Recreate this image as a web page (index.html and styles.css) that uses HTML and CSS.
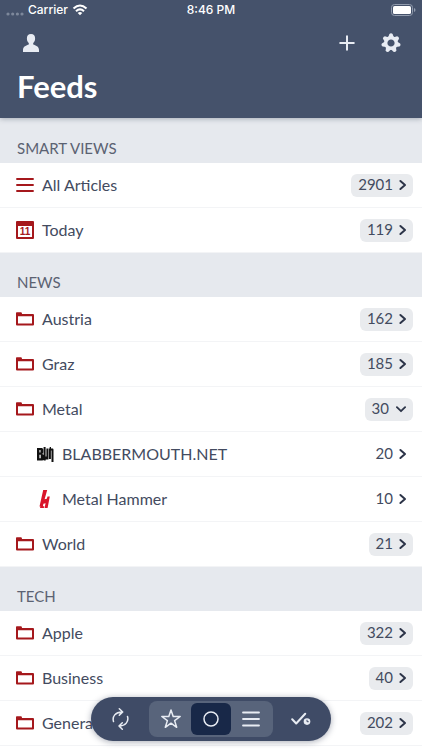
FILE: index.html
```html
<!DOCTYPE html>
<html lang="en">
<head>
<meta charset="utf-8">
<meta name="viewport" content="width=device-width, initial-scale=1">
<title>Feeds</title>
<link rel="stylesheet" href="styles.css">
</head>
<body>
<svg class="symbols" aria-hidden="true">
  <symbol id="folder" viewBox="0 0 18 14"><path fill="currentColor" fill-rule="evenodd" d="M0 1Q0 .3.8.3H5q.7 0 .9 1l.1.7h11q1 0 1 1v9.500q0 1-1 1H1q-1 0-1-1ZM2 4.200v7.300h14V4.200Z"/></symbol>
  <symbol id="lines" viewBox="0 0 18 16"><path d="M1 2h16M1 8h16M1 14h16" fill="none" stroke="currentColor" stroke-width="1.900" stroke-linecap="round"/></symbol>
  <symbol id="right" viewBox="0 0 10 12"><path d="M2.400 2 7 6l-4.600 4" fill="none" stroke="currentColor" stroke-width="2" stroke-linecap="round" stroke-linejoin="round"/></symbol>
  <symbol id="down" viewBox="0 0 10 12"><path d="m.9 4.200 4.100 4 4.100-4" fill="none" stroke="currentColor" stroke-width="1.800" stroke-linecap="round" stroke-linejoin="round"/></symbol>
</svg>
<header class="header">
  <div class="status">
    <span class="carrier">
      <svg class="signal" viewBox="0 0 18 4"><path d="M2 2h.01M6.700 2h.01M11.400 2h.01M16 2h.01" stroke="#7d889b" stroke-width="3.200" stroke-linecap="round"/></svg>
      Carrier
      <svg class="wifi" viewBox="0 0 16 12"><path d="M1.500 4.500Q8-1.500 14.500 4.500M4 7.200Q8 3.600 12 7.200" fill="none" stroke="#fff" stroke-width="2.100"/><path d="M5.700 8.900Q8 7 10.300 8.900L8 11.300Z" fill="#fff"/></svg>
    </span>
    <time class="clock">8:46 PM</time>
    <svg class="battery" viewBox="0 0 25 12"><rect x=".5" y=".5" width="21" height="11" rx="3" fill="none" stroke="#929cae"/><rect x="2" y="2" width="18" height="8" rx="1.600" fill="#fff"/><path d="M23 4q1.500.5 1.500 2T23 8Z" fill="#929cae"/></svg>
  </div>
  <nav class="actions">
    <button class="icon-button" type="button" aria-label="Account"><svg class="person" viewBox="0 0 16 18"><path fill="currentColor" d="M8 0C5.200 0 3.700 2 3.900 4.700c.1 2 .8 3.400 1.900 4.400v1.500C3.500 11.400 0 12.500 0 16v2h16v-2c0-3.500-3.500-4.600-5.800-5.400V9.100c1.100-1 1.800-2.400 1.900-4.400C12.300 2 10.800 0 8 0Z"/></svg></button>
    <span class="spacer"></span>
    <button class="icon-button" type="button" aria-label="Add feed"><svg class="plus" viewBox="0 0 16 16"><path d="M8 1.200v13.600M1.200 8h13.600" stroke="currentColor" stroke-width="2" stroke-linecap="round"/></svg></button>
    <button class="icon-button" type="button" aria-label="Settings"><svg class="gear" viewBox="-10 -10 20 20">
      <g fill="currentColor"><path id="tooth" d="M-3-5-1.600-9Q0-10.400 1.600-9L3-5Z"/>
      <use href="#tooth" transform="rotate(51.430)"/><use href="#tooth" transform="rotate(102.860)"/><use href="#tooth" transform="rotate(154.290)"/><use href="#tooth" transform="rotate(205.710)"/><use href="#tooth" transform="rotate(257.140)"/><use href="#tooth" transform="rotate(308.570)"/></g>
      <circle r="5.300" fill="none" stroke="currentColor" stroke-width="3.400"/></svg></button>
  </nav>
  <h1 class="title">Feeds</h1>
</header>
<main class="feeds">
  <section>
    <h2 class="group">SMART VIEWS</h2>
    <ul class="list">
      <li><a class="row" href="#all"><svg class="icon"><use href="#lines"/></svg><span class="name">All Articles</span><span class="count">2901<svg class="chevron"><use href="#right"/></svg></span></a></li>
      <li><a class="row" href="#today"><span class="calendar">11</span><span class="name">Today</span><span class="count">119<svg class="chevron"><use href="#right"/></svg></span></a></li>
    </ul>
  </section>
  <section>
    <h2 class="group">NEWS</h2>
    <ul class="list">
      <li><a class="row" href="#austria"><svg class="icon"><use href="#folder"/></svg><span class="name">Austria</span><span class="count">162<svg class="chevron"><use href="#right"/></svg></span></a></li>
      <li><a class="row" href="#graz"><svg class="icon"><use href="#folder"/></svg><span class="name">Graz</span><span class="count">185<svg class="chevron"><use href="#right"/></svg></span></a></li>
      <li><a class="row" href="#metal"><svg class="icon"><use href="#folder"/></svg><span class="name">Metal</span><span class="count">30<svg class="chevron chevron-down"><use href="#down"/></svg></span></a></li>
      <li><a class="row child" href="#blabbermouth"><svg class="icon" viewBox="0 0 18 18"><path fill="#111" fill-rule="evenodd" d="M1 3h5.200l1 1.200v3.400L6.400 9l1.200 1v4.700l-1.100.8H1ZM3.400 5v2.600h1.100V5Zm0 4.800v3.500h1.300V9.800ZM7.600 2h2v9.500h.8V3.500h1.800V6h.5V3.500h1V2h1.300v1.500H17l.5 1V17h-2V5.500h-.6V14h-2V6h-.5v8.500H9.700v1H7.600Z"/></svg><span class="name">BLABBERMOUTH.NET</span><span class="count">20<svg class="chevron"><use href="#right"/></svg></span></a></li>
      <li><a class="row child" href="#hammer"><svg class="icon" viewBox="0 0 18 18"><path fill="#d9152b" d="M7.200 0h4L8.600 9.200l2.200-.4.700-2.300h2.300L11.600 18H8.500l1.100-4.700-2.200.4-.5 2.500h1.400l-.5 1.800H4l.4-1.600H3.500Z"/></svg><span class="name">Metal Hammer</span><span class="count">10<svg class="chevron"><use href="#right"/></svg></span></a></li>
      <li><a class="row" href="#world"><svg class="icon"><use href="#folder"/></svg><span class="name">World</span><span class="count">21<svg class="chevron"><use href="#right"/></svg></span></a></li>
    </ul>
  </section>
  <section>
    <h2 class="group">TECH</h2>
    <ul class="list">
      <li><a class="row" href="#apple"><svg class="icon"><use href="#folder"/></svg><span class="name">Apple</span><span class="count">322<svg class="chevron"><use href="#right"/></svg></span></a></li>
      <li><a class="row" href="#business"><svg class="icon"><use href="#folder"/></svg><span class="name">Business</span><span class="count">40<svg class="chevron"><use href="#right"/></svg></span></a></li>
      <li><a class="row" href="#general"><svg class="icon"><use href="#folder"/></svg><span class="name">General</span><span class="count">202<svg class="chevron"><use href="#right"/></svg></span></a></li>
    </ul>
  </section>
</main>
<div class="dock">
  <button class="dock-button" type="button" aria-label="Refresh"><svg class="dock-icon" viewBox="0 0 22 22" fill="none" stroke="currentColor" stroke-width="1.500" stroke-linecap="round" stroke-linejoin="round"><path d="M4.500 13.500C3 8.500 6.500 4 13 4M10.300.8 13.700 4l-3.400 3.300M18.500 8.500c1.500 5-2 9.500-8.300 9.500M13.300 14.700 10 18l3.300 3.200"/></svg></button>
  <div class="segments">
    <button class="segment" type="button" aria-label="Starred"><svg class="dock-icon" viewBox="0 0 22 22"><path d="m11 2 2.200 6.500h7L14.600 12.600l2.100 6.700L11 15.200l-5.700 4.100 2.100-6.700L1.800 8.500h7Z" fill="none" stroke="currentColor" stroke-width="1.500" stroke-linejoin="round"/></svg></button>
    <button class="segment selected" type="button" aria-label="Unread"><svg class="dock-icon" viewBox="0 0 22 22"><circle cx="11" cy="11" r="7" fill="none" stroke="currentColor" stroke-width="1.500"/></svg></button>
    <button class="segment" type="button" aria-label="All"><svg class="dock-icon" viewBox="0 0 22 22"><path d="M3 4.500h16M3 11h16M3 17.500h16" stroke="currentColor" stroke-width="1.800" stroke-linecap="round"/></svg></button>
  </div>
  <button class="dock-button" type="button" aria-label="Mark as read"><svg class="dock-icon" viewBox="0 0 22 22"><path d="m1.200 11.300 4 4.200 9-9.800" fill="none" stroke="currentColor" stroke-width="2" stroke-linecap="round" stroke-linejoin="round"/><circle cx="16" cy="13.600" r="3.300" fill="currentColor"/><path d="M16 11.800v1.900h1.700" fill="none" stroke="#3f4b66" stroke-width="1"/></svg></button>
</div>
</body>
</html>
```
FILE: styles.css
```css
* {
  box-sizing: border-box;
}

body {
  margin: 0;
  height: 100vh;
  display: flex;
  flex-direction: column;
  overflow: hidden;
  background: #fff;
  color: #434b60;
  font-family: Lato, sans-serif;
}

button {
  padding: 0;
  border: 0;
  background: none;
  color: inherit;
}

svg {
  display: block;
  flex: none;
}

.symbols {
  display: none;
}

.header {
  flex: none;
  position: relative;
  padding-bottom: 12px;
  background: #45526b;
  color: #e8ecf3;
  box-shadow: 0 1px 5px rgba(50, 60, 80, 0.35);
}

.status {
  display: grid;
  grid-template-columns: 1fr auto 1fr;
  align-items: center;
  height: 20px;
  padding: 0 6px;
  color: #fff;
  font: 500 12px/20px Inter, sans-serif;
}

.carrier {
  display: flex;
  align-items: center;
  gap: 4px;
}

.signal {
  width: 18px;
  height: 4px;
  margin-top: 8px;
}

.wifi {
  width: 16px;
  height: 12px;
}

.battery {
  width: 25px;
  height: 12px;
  justify-self: end;
}

.actions {
  display: flex;
  align-items: center;
  height: 46px;
  padding: 0 9px;
}

.icon-button {
  display: grid;
  place-items: center;
  width: 44px;
  height: 44px;
}

.spacer {
  flex: 1;
}

.person {
  width: 16px;
  height: 18px;
}

.plus {
  width: 16px;
  height: 16px;
}

.gear {
  width: 20px;
  height: 20px;
}

.title {
  margin: 0;
  padding: 0 17px;
  color: #fff;
  font-size: 31px;
  font-weight: 700;
  line-height: 40px;
}

.feeds {
  flex: 1;
  min-height: 0;
  padding-top: 1px;
  overflow: hidden;
  background: linear-gradient(#e6e9ee 50%, #fff 50%);
}

.group {
  margin: 0;
  padding: 19px 17px 5px;
  background: #e6e9ee;
  color: #5b6272;
  font-size: 15px;
  font-weight: 400;
  line-height: 20px;
}

.list {
  margin: 0;
  padding: 0;
  list-style: none;
  background: #fff;
}

.row {
  display: flex;
  align-items: center;
  gap: 8px;
  height: 45px;
  padding: 0 9px 0 16px;
  border-bottom: 1px solid #f3f4f6;
  color: inherit;
  font-size: 16px;
  text-decoration: none;
}

.child {
  padding-left: 36px;
}

.icon {
  width: 18px;
  height: 18px;
  color: #a5181c;
}

.calendar {
  width: 18px;
  height: 18px;
  border: 2px solid #a5181c;
  border-top-width: 5px;
  border-radius: 1px;
  color: #a5181c;
  font: 700 10px/12px "Liberation Sans", sans-serif;
  text-align: center;
}

.name {
  flex: 1;
  padding-bottom: 2px;
}

.count {
  display: flex;
  align-items: center;
  gap: 5px;
  height: 23px;
  padding: 0 5px 2px 7px;
  border-radius: 6px;
  background: #e9ebee;
  font-size: 15px;
}

.child .count {
  background: none;
}

.chevron {
  width: 10px;
  height: 12px;
  margin-top: 2px;
  color: #2c3448;
}

.chevron-down {
  margin-right: 2px;
  margin-left: 2px;
}

.dock {
  position: fixed;
  bottom: 9px;
  left: 50%;
  transform: translateX(-50%);
  display: flex;
  align-items: center;
  padding: 4px 0;
  border-radius: 22px;
  background: #3f4b66;
  color: #e8ecf3;
  box-shadow: 0 1px 6px rgba(40, 50, 75, 0.4);
}

.dock-button {
  display: grid;
  place-items: center;
  width: 58px;
  height: 36px;
}

.segments {
  display: flex;
  align-items: center;
  padding: 2px;
  border-radius: 8px;
  background: #58647b;
}

.segment {
  display: grid;
  place-items: center;
  width: 40px;
  height: 32px;
  border-radius: 6px;
}

.selected {
  background: #182848;
}

.dock-icon {
  width: 22px;
  height: 22px;
}
```
